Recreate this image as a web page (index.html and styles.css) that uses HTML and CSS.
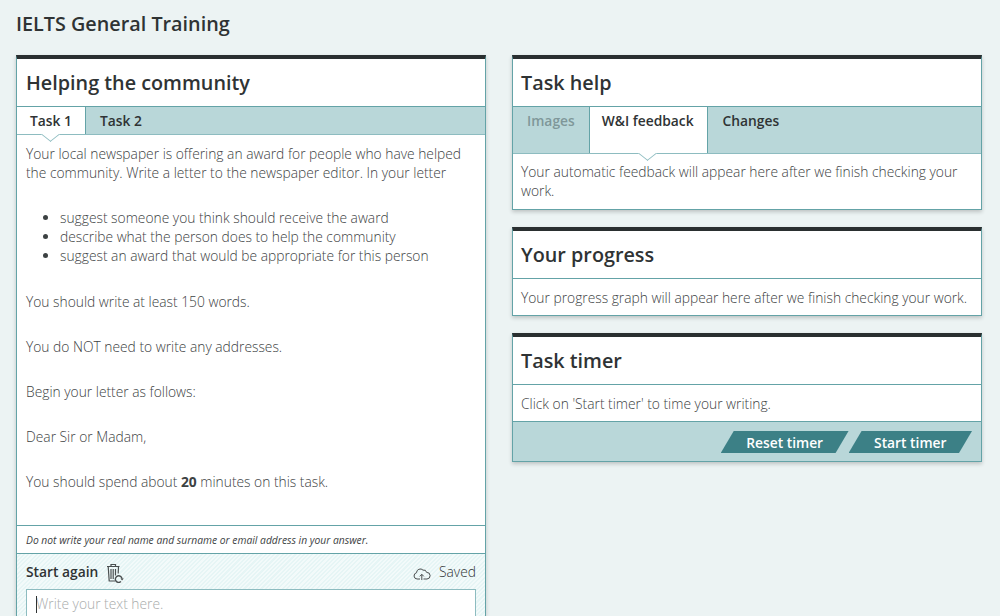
FILE: index.html
```html
<!DOCTYPE html>
<html>
<head>
    <meta charset="UTF-8">
    <meta name="viewport" content="width=device-width, initial-scale=1.0">
    <title>IELTS General Training</title>
    <link rel="stylesheet" href="styles.css">
</head>
<body>
    <h1 class="page-title">IELTS General Training</h1>
    <div class="columns">
        <div class="card card-task">
            <h2>Helping the community</h2>
            <div class="tabs tabs-task">
                <div class="tab active">Task 1</div>
                <div class="tab">Task 2</div>
            </div>
            <div class="task-text">
                <p class="intro">Your local newspaper is offering an award for people who have helped the community. Write a letter to the newspaper editor. In your letter</p>
                <ul>
                    <li>suggest someone you think should receive the award</li>
                    <li>describe what the person does to help the community</li>
                    <li>suggest an award that would be appropriate for this person</li>
                </ul>
                <p>You should write at least 150 words.</p>
                <p>You do NOT need to write any addresses.</p>
                <p>Begin your letter as follows:</p>
                <p>Dear Sir or Madam,</p>
                <p>You should spend about <b>20</b> minutes on this task.</p>
            </div>
            <div class="warning">Do not write your real name and surname or email address in your answer.</div>
            <div class="editor">
                <div class="editor-top">
                    <div class="start-again">
                        Start again
                        <svg class="icon-bin" viewBox="0 0 18 20" fill="none" stroke="#4a4f50" stroke-width="1.2">
                            <path d="M1 3.5h12.5M5 3.5V1.5h4.5v2M2.2 3.5l1 14.5h6M12.5 3.5l-.3 7"/>
                            <path d="M5 6v10M7.2 6v10M9.5 6v6.5"/>
                            <path d="M16 15.8a3.3 3.3 0 1 0-1 2.7" stroke-width="1.4"/>
                            <path d="M14.4 15.4h3.4l-1.7 2z" fill="#4a4f50" stroke="none"/>
                        </svg>
                    </div>
                    <div class="saved">
                        <svg class="icon-cloud" viewBox="0 0 18 13" fill="none" stroke="#4a4f50" stroke-width="1">
                            <path d="M7 12H4a3.2 3.2 0 0 1-.5-6.3A3.8 3.8 0 0 1 10 3.1a3 3 0 0 1 3.6 2.3A3.3 3.3 0 0 1 14 12h-3.5"/>
                            <path d="M8.8 13V7.4M6.8 9.4l2-2.1 2 2.1"/>
                        </svg>
                        Saved
                    </div>
                </div>
                <div class="answer"><span class="caret"></span>Write your text here.</div>
            </div>
        </div>

        <div class="side">
            <div class="card">
                <h2>Task help</h2>
                <div class="tabs tabs-help">
                    <div class="tab disabled">Images</div>
                    <div class="tab active">W&amp;I feedback</div>
                    <div class="tab">Changes</div>
                </div>
                <div class="card-body body-help">Your automatic feedback will appear here after we finish checking your work.</div>
            </div>
            <div class="card">
                <h2>Your progress</h2>
                <div class="card-body">Your progress graph will appear here after we finish checking your work.</div>
            </div>
            <div class="card">
                <h2>Task timer</h2>
                <div class="card-body">Click on 'Start timer' to time your writing.</div>
                <div class="timer-buttons">
                    <button class="skew-btn">Reset timer</button>
                    <button class="skew-btn">Start timer</button>
                </div>
            </div>
        </div>
    </div>
</body>
</html>
```

FILE: styles.css
```css
html, body {
    height: 616px;
    overflow: hidden;
}

body {
    font-family: "Open Sans", sans-serif;
    background-color: #ecf3f3;
    color: #2f3334;
    margin: 0;
    padding: 0 18px 0 16px;
    box-sizing: border-box;
}

.page-title {
    font-size: 19.8px;
    font-weight: 600;
    line-height: 28px;
    margin: 0;
    padding: 10px 0 17px;
}

.columns {
    display: flex;
    align-items: flex-start;
    gap: 26px;
}

.card {
    background-color: #ffffff;
    border: 1px solid #64a3a7;
    border-top: 4px solid #2a2f30;
    box-shadow: 0 2px 4px rgba(0, 0, 0, 0.2);
    box-sizing: border-box;
    width: 470px;
    flex: none;
}

.card h2 {
    font-size: 19.8px;
    font-weight: 600;
    line-height: 46px;
    margin: 0;
    padding: 1px 0 0 8px;
    border-bottom: 1px solid #64a3a7;
}

.card-task {
    height: 561px;
    overflow: hidden;
    border-bottom: none;
}

.card-task h2 {
    line-height: 47px;
    padding: 0 0 0 9px;
}

.side {
    display: flex;
    flex-direction: column;
    gap: 17px;
}

/* tabs */
.tabs {
    display: flex;
    background-color: #b9d7d9;
    border-bottom: 1px solid #8dbcc0;
    font-size: 13.8px;
    font-weight: 600;
}

.tabs-task {
    height: 27px;
    line-height: 27px;
}

.tabs-help {
    height: 46px;
    line-height: 27px;
}

.tab {
    padding: 0 14px;
    position: relative;
}

.tabs-task .tab.active {
    padding: 0 13px;
}

.tabs-help .tab.active {
    padding: 0 13px 0 12px;
    border-left: 1px solid #64a3a7;
}

.tabs-help .tab:last-child {
    padding-left: 15px;
}

.tab.active {
    background-color: #ffffff;
    border-right: 1px solid #64a3a7;
}

.tab.disabled {
    color: #7f9799;
}

.tab.active::after {
    content: "";
    position: absolute;
    left: 50%;
    bottom: -7px;
    width: 13px;
    height: 13px;
    margin-left: -7px;
    background-color: #ffffff;
    border-right: 1px solid #8dbcc0;
    border-bottom: 1px solid #8dbcc0;
    transform: scaleY(0.8) rotate(45deg);
    box-sizing: border-box;
}

.card-body {
    font-size: 13.8px;
    font-weight: 300;
    line-height: 19px;
    color: #3d4243;
    padding: 9px 8px 8px;
}

.body-help {
    padding: 8px 8px 9px;
}

/* task text */
.task-text {
    font-size: 13.8px;
    font-weight: 300;
    line-height: 19px;
    color: #3d4243;
    padding: 9px 9px 34px;
}

.task-text p {
    margin: 26px 0 0;
}

.task-text p.intro {
    margin: 0;
}

.task-text b {
    font-weight: 700;
}

.task-text ul {
    margin: 26px 0 27px;
    padding-left: 34px;
}

.warning {
    font-size: 10.3px;
    font-style: italic;
    line-height: 26px;
    color: #3d4243;
    padding: 1px 0 0 9px;
    border-top: 1px solid #64a3a7;
    border-bottom: 1px solid #64a3a7;
}

.editor {
    background-color: #e6f5f5;
    background-image: repeating-linear-gradient(135deg, rgba(255, 255, 255, 0.5) 0, rgba(255, 255, 255, 0.5) 1.5px, transparent 1.5px, transparent 3px);
    padding: 0 9px 10px;
}

.editor-top {
    display: flex;
    justify-content: space-between;
    align-items: center;
    height: 35px;
    font-size: 13.8px;
}

.start-again {
    display: flex;
    align-items: center;
    gap: 8px;
    font-weight: 600;
}

.saved {
    display: flex;
    align-items: center;
    gap: 8px;
    font-weight: 300;
}

.icon-bin {
    width: 18px;
    height: 20px;
    margin-top: 2px;
}

.icon-cloud {
    width: 18px;
    height: 13px;
    margin-top: 3px;
}

.answer {
    background-color: #ffffff;
    border: 1px solid #8dbcc0;
    height: 60px;
    font-size: 13.8px;
    font-weight: 300;
    line-height: 28px;
    color: #a9acac;
    padding-left: 9px;
    position: relative;
}

.caret {
    position: absolute;
    left: 9px;
    top: 6px;
    width: 1px;
    height: 17px;
    background-color: #2f3334;
}

/* timer */
.timer-buttons {
    display: flex;
    justify-content: flex-end;
    background-color: #b9d7d9;
    border-top: 1px solid #64a3a7;
    padding: 9px 9px 8px 0;
}

.skew-btn {
    font-family: inherit;
    font-size: 13.8px;
    font-weight: 600;
    color: #ffffff;
    background-color: #3c8086;
    border: none;
    height: 22px;
    padding: 0 25.5px;
    clip-path: polygon(13px 0, 100% 0, calc(100% - 13px) 100%, 0 100%);
}
```
